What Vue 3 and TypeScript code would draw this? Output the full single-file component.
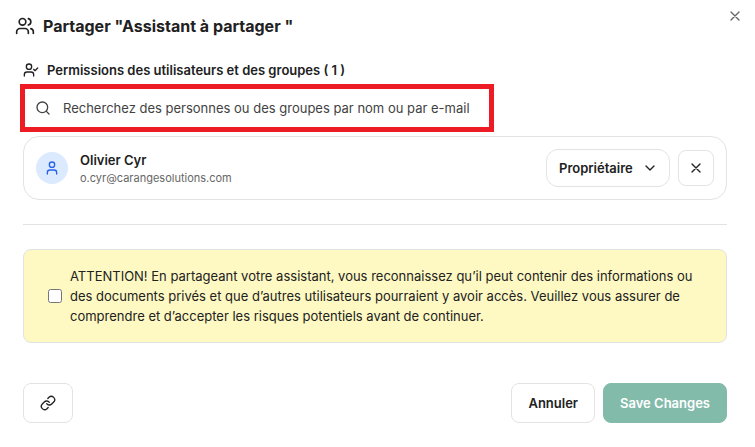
<script setup lang="ts">
import { computed, ref } from 'vue'

interface Member {
  id: number
  name: string
  email: string
  role: string
}

const roles: string[] = ['Propriétaire']
const members = ref<Member[]>([
  { id: 1, name: 'Olivier Cyr', email: 'o.cyr@carangesolutions.com', role: 'Propriétaire' },
])
const query = ref('')
const accepted = ref(false)
const count = computed<number>(() => members.value.length)

function removeMember(id: number): void {
  members.value = members.value.filter((m) => m.id !== id)
}
</script>

<template>
  <main class="dialog" role="dialog" aria-labelledby="dialog-title">
    <button class="dismiss" type="button" aria-label="Fermer">
      <svg class="icon" width="16" height="16" viewBox="0 0 24 24"><path d="M18 6 6 18M6 6l12 12" /></svg>
    </button>

    <header class="header">
      <svg class="icon" width="20" height="20" viewBox="0 0 24 24">
        <path d="M16 21v-2a4 4 0 0 0-4-4H6a4 4 0 0 0-4 4v2" />
        <circle cx="9" cy="7" r="4" />
        <path d="M22 21v-2a4 4 0 0 0-3-3.87" />
        <path d="M16 3.13a4 4 0 0 1 0 7.75" />
      </svg>
      <h1 id="dialog-title" class="title">Partager "Assistant à partager "</h1>
    </header>

    <div class="content">
      <section class="permissions">
        <h2 class="subtitle">
          <svg class="icon" width="16" height="16" viewBox="0 0 24 24">
            <path d="m16 11 2 2 4-4" />
            <path d="M16 21v-2a4 4 0 0 0-4-4H6a4 4 0 0 0-4 4v2" />
            <circle cx="9" cy="7" r="4" />
          </svg>
          <span>Permissions des utilisateurs et des groupes ( {{ count }} )</span>
        </h2>

        <label class="search">
          <svg class="icon" width="16" height="16" viewBox="0 0 24 24">
            <circle cx="11" cy="11" r="8" />
            <path d="m21 21-4.3-4.3" />
          </svg>
          <input
            v-model="query"
            class="search-input"
            type="text"
            aria-label="Rechercher"
            placeholder="Recherchez des personnes ou des groupes par nom ou par e-mail"
          />
        </label>

        <ul class="members">
          <li v-for="member in members" :key="member.id" class="member">
            <span class="avatar">
              <svg class="icon" width="16" height="16" viewBox="0 0 24 24">
                <path d="M19 21v-2a4 4 0 0 0-4-4H9a4 4 0 0 0-4 4v2" />
                <circle cx="12" cy="7" r="4" />
              </svg>
            </span>
            <div class="identity">
              <span class="name">{{ member.name }}</span>
              <span class="email">{{ member.email }}</span>
            </div>
            <label class="role">
              <select v-model="member.role" class="role-select" aria-label="Rôle">
                <option v-for="role in roles" :key="role" :value="role">{{ role }}</option>
              </select>
              <svg class="icon chevron" width="16" height="16" viewBox="0 0 24 24"><path d="m6 9 6 6 6-6" /></svg>
            </label>
            <button class="remove" type="button" aria-label="Retirer" @click="removeMember(member.id)">
              <svg class="icon" width="16" height="16" viewBox="0 0 24 24"><path d="M18 6 6 18M6 6l12 12" /></svg>
            </button>
          </li>
        </ul>
      </section>

      <hr class="divider" />

      <div class="warning">
        <input id="accept" v-model="accepted" class="accept" type="checkbox" />
        <label for="accept">ATTENTION! En partageant votre assistant, vous reconnaissez qu’il peut contenir des informations ou des documents privés et que d’autres utilisateurs pourraient y avoir accès. Veuillez vous assurer de comprendre et d’accepter les risques potentiels avant de continuer.</label>
      </div>

      <footer class="footer">
        <button class="button copy" type="button" aria-label="Copier le lien">
          <svg class="icon" width="16" height="16" viewBox="0 0 24 24">
            <path d="M10 13a5 5 0 0 0 7.54.54l3-3a5 5 0 0 0-7.07-7.07l-1.72 1.71" />
            <path d="M14 11a5 5 0 0 0-7.54-.54l-3 3a5 5 0 0 0 7.07 7.07l1.71-1.71" />
          </svg>
        </button>
        <button class="button" type="button">Annuler</button>
        <button class="button save" type="button" :disabled="!accepted">Save Changes</button>
      </footer>
    </div>
  </main>
</template>

<style>
body {
  margin: 0;
  background: #ffffff;
}
</style>

<style scoped>
.dialog,
.dialog * {
  box-sizing: border-box;
}

.dialog {
  position: relative;
  color: #212121;
  font-family: Inter, "Liberation Sans", sans-serif;
  font-size: 13px;
  line-height: 20px;
}

button,
input,
select {
  margin: 0;
  color: inherit;
  font: inherit;
}

.icon {
  display: block;
  flex: none;
  fill: none;
  stroke: currentColor;
  stroke-width: 2;
  stroke-linecap: round;
  stroke-linejoin: round;
}

.dismiss {
  position: absolute;
  top: 8px;
  right: 12px;
  padding: 0;
  border: 0;
  background: none;
  color: #666666;
}

.header {
  display: flex;
  align-items: center;
  gap: 8px;
  padding: 16px 40px 0 15px;
}

.title {
  margin: 0;
  font-size: 16px;
  font-weight: 700;
}

.content {
  padding: 24px 28px 24px 23px;
}

.subtitle {
  display: flex;
  align-items: center;
  gap: 8px;
  margin: 0;
  font-size: 13px;
  font-weight: 600;
}

.search {
  display: flex;
  align-items: center;
  gap: 12px;
  max-width: 474px;
  height: 48px;
  margin: 4px 0 4px -3px;
  padding: 0 10px;
  border: 5px solid #ed1c24;
  color: #424242;
}

.search-input {
  flex: 1;
  min-width: 0;
  padding: 0;
  border: 0;
  outline: 0;
  background: none;
}

.search-input::placeholder {
  color: #424242;
  opacity: 1;
}

.members {
  margin: 0;
  padding: 0;
  list-style: none;
}

.member {
  display: flex;
  align-items: center;
  padding: 12px;
  border: 1px solid #e3e3e3;
  border-radius: 16px;
}

.avatar {
  display: flex;
  align-items: center;
  justify-content: center;
  width: 32px;
  height: 32px;
  border-radius: 50%;
  background: #dbeafe;
  color: #2563eb;
}

.identity {
  display: flex;
  flex: 1;
  flex-direction: column;
  min-width: 0;
  margin-left: 12px;
}

.name {
  font-weight: 600;
}

.email {
  color: #666666;
  font-size: 11px;
  line-height: 16px;
}

.role {
  display: grid;
  align-items: center;
  margin-right: 8px;
}

.role-select {
  grid-area: 1 / 1;
  height: 38px;
  padding: 0 36px 0 12px;
  border: 1px solid #e3e3e3;
  border-radius: 12px;
  appearance: none;
  background: none;
  font-weight: 600;
}

.chevron {
  grid-area: 1 / 1;
  justify-self: end;
  margin-right: 12px;
  pointer-events: none;
}

.remove {
  display: flex;
  align-items: center;
  justify-content: center;
  width: 36px;
  height: 36px;
  padding: 0;
  border: 1px solid #e3e3e3;
  border-radius: 8px;
  background: none;
}

.divider {
  margin: 24px 0;
  border: 0;
  border-top: 1px solid #e3e3e3;
}

.warning {
  display: flex;
  align-items: center;
  gap: 8px;
  padding: 16px 24px;
  border: 1px solid #e3e3e3;
  border-radius: 8px;
  background: #fef9c3;
}

.accept {
  flex: none;
  width: 14px;
  height: 14px;
}

.footer {
  display: flex;
  gap: 8px;
  margin-top: 40px;
}

.button {
  display: flex;
  align-items: center;
  justify-content: center;
  height: 40px;
  padding: 0 16px;
  border: 1px solid #e3e3e3;
  border-radius: 8px;
  background: #ffffff;
  font-weight: 600;
}

.copy {
  margin-right: auto;
}

.save {
  border-color: #83bbaa;
  background: #83bbaa;
  color: #ffffff;
}
</style>
